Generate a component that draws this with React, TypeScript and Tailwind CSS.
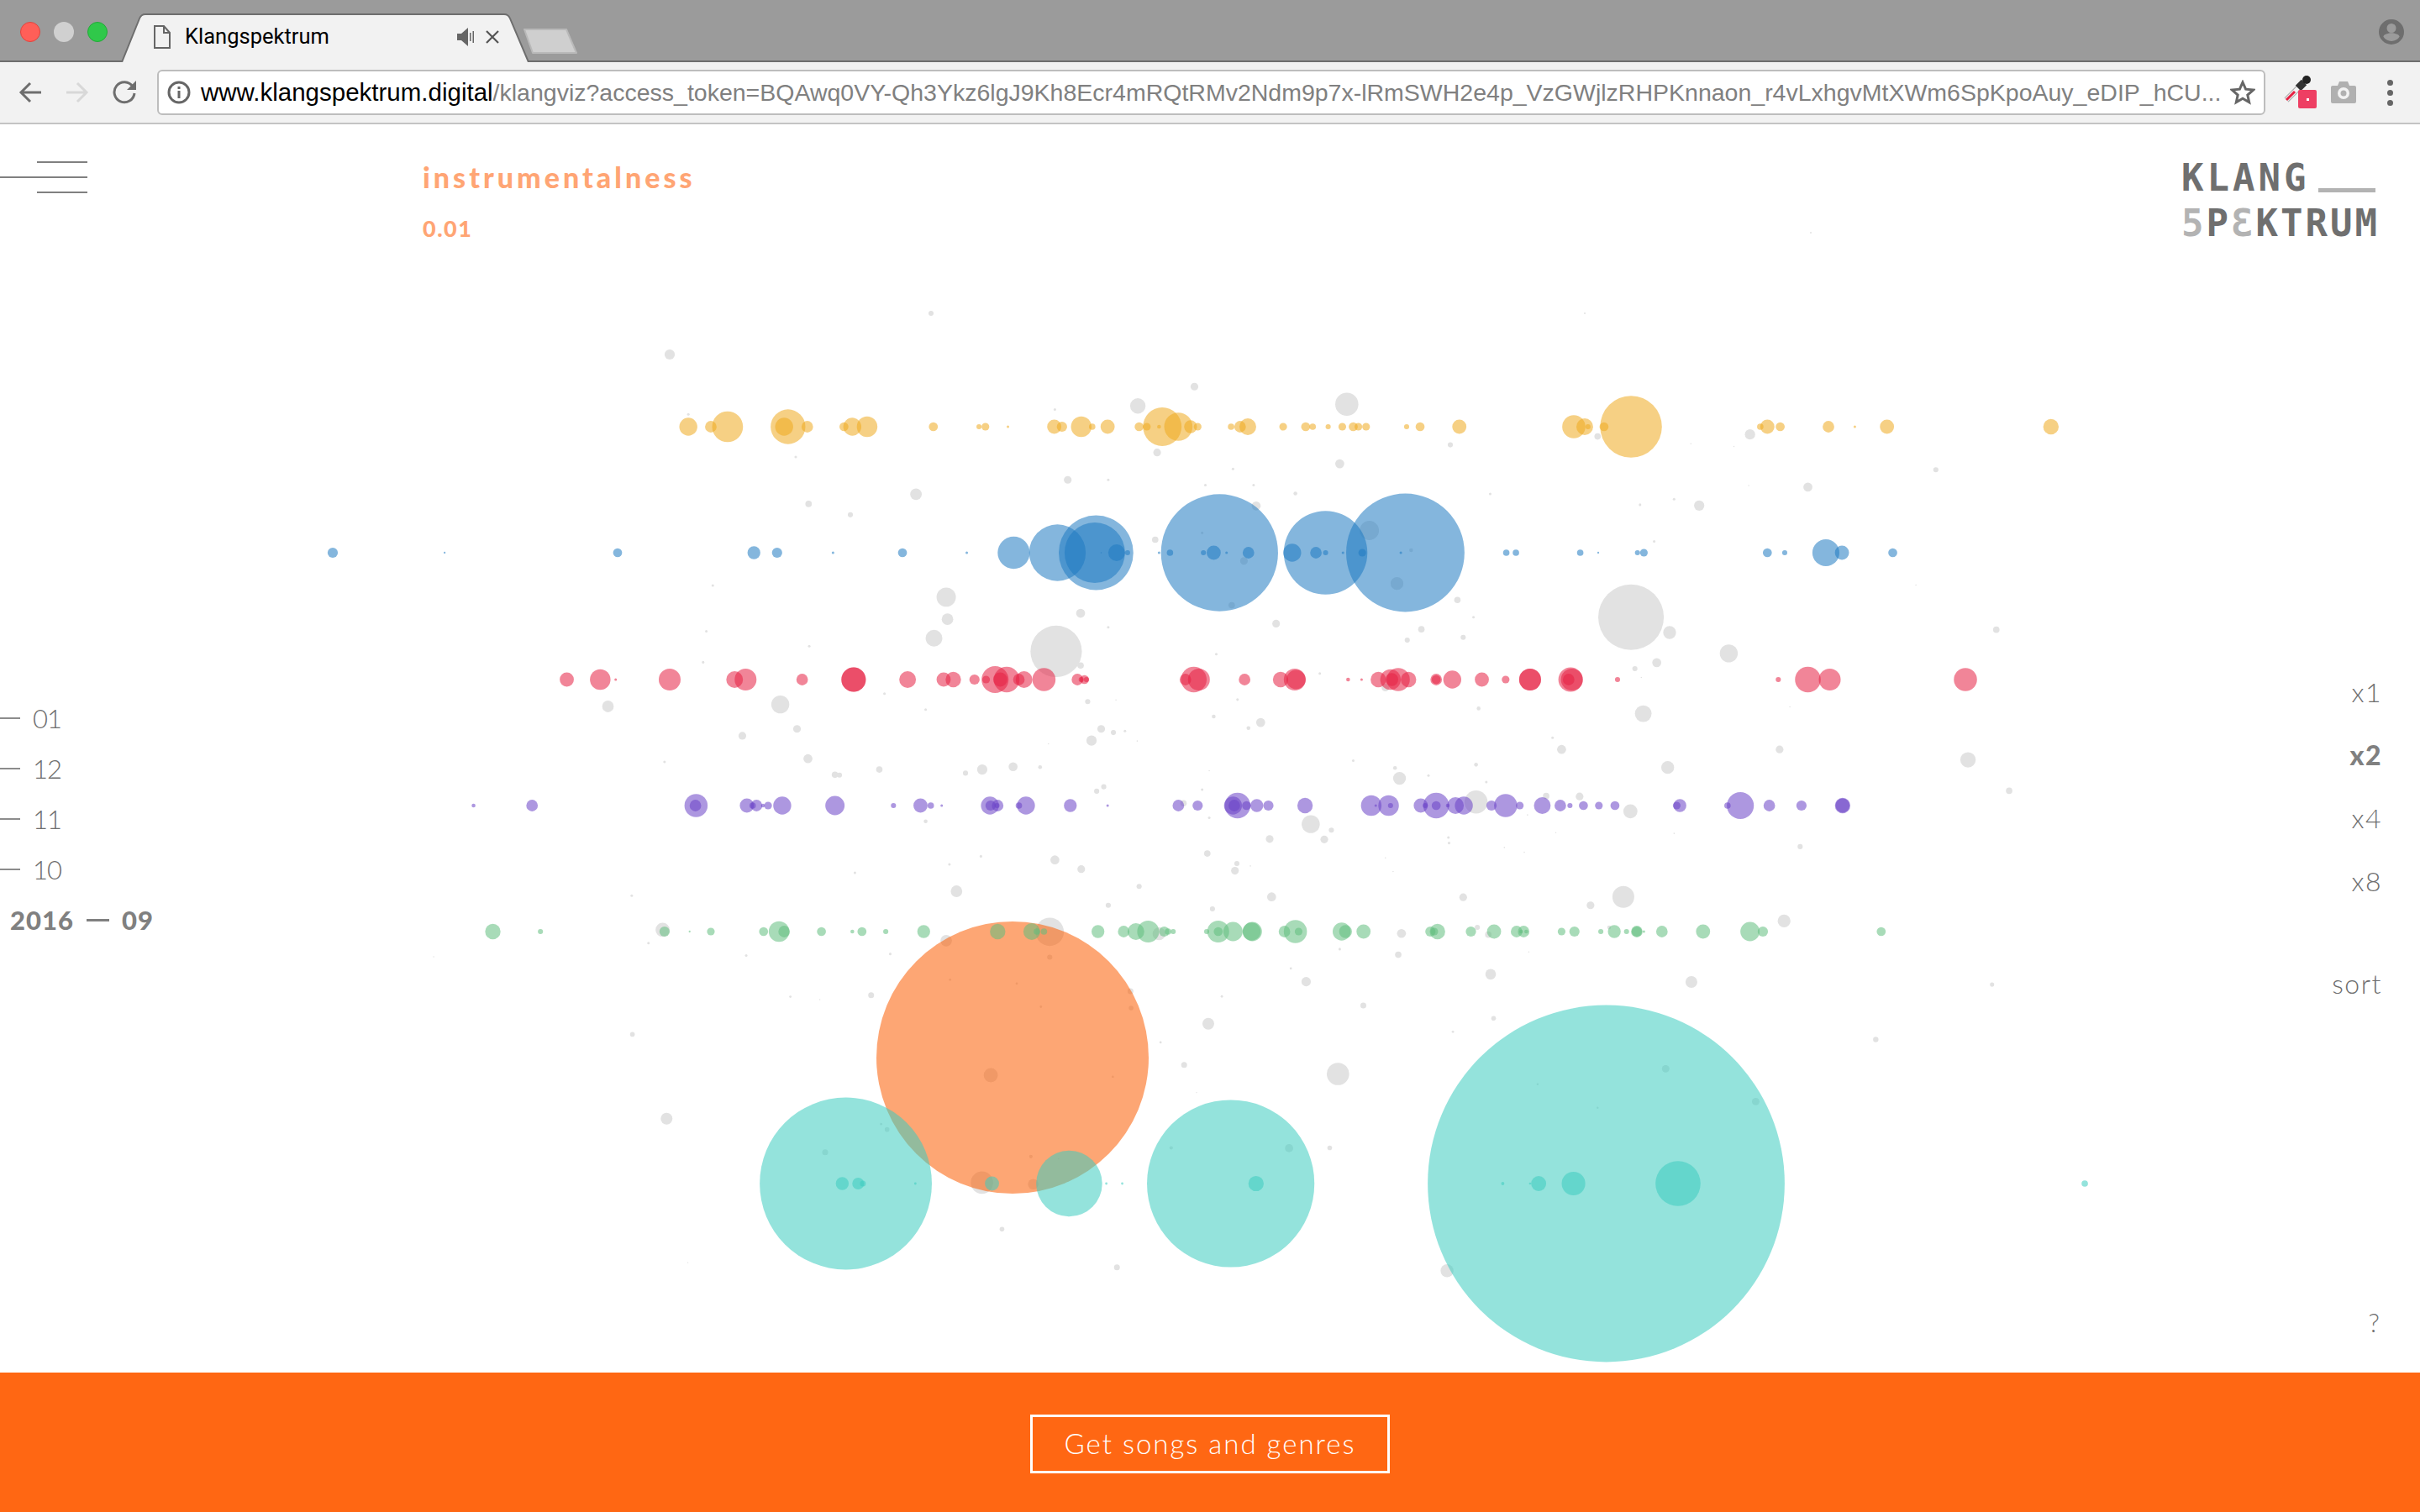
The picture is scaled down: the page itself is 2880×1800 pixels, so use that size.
import React from "react";

type C = [number, number];
type G = [number, number, number];
const K6 = 0.7653;
const K8 = 0.7015;
const K9 = 0.6378;

const rows: { y: number; fill: string; a: C[]; b: C[]; c?: C[]; d?: C[] }[] = [
  {
    y: 508,
    fill: "#EFAA1F",
    a: [[600,14],[635,9],[661,24],[755,27],[749,14],[785,9],[842,7],[855,14],[878,16],[981,7],[1052,4],[1062,6],[1097,2],[1169,11],[1181,8],[1211,16],[1228,5],[1252,11],[1301,7],[1313,6],[1332,3],[1337,30],[1362,22],[1381,10],[1392,6],[1444,5],[1458,9],[1470,13],[1525,6],[1560,7]],
    b: [[212,5],[236,4],[258,6],[275,7],[283,6],[295,6],[358,4],[379,7],[440,11],[618,18],[635,13],[640,4],[665,7],[707,48],[908,5],[919,11],[939,7],[1014,9],[1055,2],[1105,11],[1360,12]],
  },
  {
    y: 658,
    fill: "#1F7AC1",
    a: [[47,8],[221,1.5],[490,7],[702,10],[738,8],[825,2],[933,7],[1033,2],[1106,25],[1174,44],[1234,58],[1232,47],[1266,13],[1242,1],[1283,4],[1332,2],[1349,5],[1401,4],[1417,11],[1426,91],[1437,2],[1471,9],[1539,14]],
    b: [[217,9],[232,4],[232,65],[259,2],[289,6],[356,92],[349,2],[513,5],[528,5],[628,5],[656,1.5],[717,4],[727,6],[919,7],[946,4],[1010,21],[1035,11],[1114,7]],
  },
  {
    y: 809,
    fill: "#E62143",
    a: [[411,11],[463,16],[487,2],[571,17],[672,13],[689,17],[777,9],[857,19],[857,19],[941,13],[997,11],[1012,12],[1045,8],[1063,6],[1077,21],[1085,11],[1095,20],[1114,9],[1122,13],[1153,18],[1205,9],[1211,4],[1216,7],[1219,4],[1373,9],[1386,20],[1394,17],[1465,9],[1521,12],[1543,17],[1545,15]],
    b: [[267,3],[288,2],[314,12],[333,16],[345,18],[335,10],[361,12],[404,9],[404,7],[429,14],[475,11],[512,6],[550,17],[550,17],[613,19],[615,17],[610,9],[686,4],[936,4],[982,20],[1016,17],[1227,18]],
  },
  {
    y: 959,
    fill: "#6A42C6",
    a: [[266,3],[357,9],[612,18],[611,9],[691,11],[700,5],[706,9],[716,3],[724,6],[746,14],[828,15],[919,4],[961,11],[977,5],[994,2],[1069,14],[1070,8],[1081,9],[1080,4],[1114,5],[1125,14],[1194,10],[1252,2],[1362,9],[1392,8],[1447,14],[1454,20],[1449,9],[1468,7],[1484,10],[1502,8],[1559,12]],
    b: [[303,16],[310,2],[330,16],[333,4],[380,11],[387,4],[404,20],[404,7],[422,3],[434,13],[447,14],[490,8],[512,18],[534,6],[569,13],[597,9],[612,4],[633,7],[657,6],[682,7],[778,6],[783,10],[857,5],[877,21],[922,9],[972,8],[1036,12],[1036,11]],
  },
  {
    y: 1109,
    fill: "#61BD7E",
    a: [[296,12],[370,4],[563,8],[602,1.5],[635,6],[717,7],[741,16],[749,9],[807,7],[855,3],[870,7],[907,4],[966,10],[1081,12],[1134,13],[1142,5],[1153,5],[1237,10],[1277,9],[1296,13],[1315,17],[1340,8],[1346,5],[1354,4],[1406,4],[1424,17],[1424,7],[1447,15],[1477,15],[1476,14],[1527,9],[1544,18],[1549,6]],
    b: [[257,14],[263,10],[291,11],[395,8],[406,12],[401,6],[458,8],[494,11],[529,9],[540,9],[536,3],[544,3],[599,6],[619,8],[660,4],[681,10],[700,4],[716,9],[716,8],[727,2],[755,9],[819,11],[892,15],[912,8],[1096,7]],
  },
  {
    y: 1409,
    fill: "#3CCCBF",
    a: [],
    b: [],
    c: [[431,11],[458,10],[466,5],[437,146],[555,2],[685,12],[816,56],[879,2],[906,2],[1090,142],[1133,13]],
    d: [[410,333],[217,3],[284,14],[268,2],[349,22],[544,42],[1303,6]],
  },
];

const grayA: G[] = [[571,46,8],[1387,126,6],[1299,174,12],[600,195,2],[1170,183,2],[767,301,2],[1329,290,6],[1447,331,2],[1190,358,6],[1253,358,2],[1404,371,2],[1479,371,2],[954,394,9],[787,418,5],[852,445,4],[1544,392,3],[1483,423,7],[1326,507,5],[1399,490,2],[1464,560,6],[638,621,2],[1001,650,15],[1003,705,9],[1210,690,7],[1445,670,5],[1514,716,6],[982,752,13],[1172,785,40],[628,735,2],[788,772,2],[1253,725,2],[623,812,2],[1421,792,2],[1210,820,5],[475,922,9],[743,917,14],[905,890,2],[1221,910,4],[969,930,2],[1265,906,1],[1454,905,2],[769,978,6],[684,995,6],[1242,978,6],[1261,987,4],[1279,983,2],[1417,947,3],[1471,976,3],[1490,962,7],[1227,1007,8],[1160,1015,1],[1298,1008,1],[563,1060,2],[786,1052,7],[828,1092,5],[835,1093,4],[897,1079,5],[1031,1088,4],[1057,1079,8],[1105,1072,7],[1147,1073,3],[1410,1082,1],[1235,1133,4],[1246,1122,4],[1399,1129,2],[1370,1163,5],[969,1208,3],[1410,1199,2],[1504,1252,6],[1566,1215,12],[1055,1295,2],[1006,1315,2],[859,1336,2],[1170,1304,7],[1211,1327,6],[1407,1288,5],[1453,1313,4],[1450,1331,6],[1474,1319,1],[512,1393,2],[1017,1382,9],[1301,1370,4],[1507,1396,7],[1253,1417,4],[1415,1426,4],[560,1478,11],[1162,1483,22],[1001,1505,9],[1332,1488,10],[538,1511,2],[204,1545,1],[690,1542,2],[914,1538,2],[1162,1546,4]];
const grayB: G[] = [[265,170,18],[426,271,4],[254,318,7],[655,250,5],[800,268,1],[867,275,1],[892,245,8],[1181,333,4],[982,376,7],[890,372,1],[300,484,15],[343,616,10],[365,533,3],[488,393,2],[437,657,5],[721,420,2],[774,406,2],[813,422,8],[743,511,2],[1150,620,1],[462,700,2],[707,700,51],[767,738,10],[381,730,5],[359,757,4],[446,750,4],[1275,731,5],[859,790,14],[747,813,7],[713,828,4],[723,850,1],[223,840,2],[325,875,6],[470,927,3],[726,940,13],[954,923,1],[585,1000,2],[599,1029,7],[938,1029,6],[1231,1055,12],[275,1057,2],[340,1075,3],[466,1067,3],[392,1094,2],[347,1101,10],[482,1110,2],[764,1074,10],[1295,1132,5],[466,1160,18],[575,1145,5],[627,1146,6],[706,1183,11],[546,1192,1],[209,1215,14],[241,1230,4],[230,1253,6],[423,1248,2],[424,1262,2],[590,1236,1],[774,1238,1],[970,1271,4],[510,1273,1],[541,1285,1],[325,1299,1],[337,1333,1],[446,1397,6],[695,1396,17],[644,1417,6],[945,1456,10],[350,1487,7],[468,1472,4],[485,1490,5],[673,1472,3],[254,1526,2],[548,1533,1],[345,1540,5]];
const grayC: G[] = [[614,304,2],[727,316,2],[920,340,5],[921,392,4],[768,388,2],[343,357,2],[393,366,1],[480,352,5],[1075,356,2],[75,474,4],[1052,441,10],[971,499,2],[1011,569,5],[683,601,12],[890,606,2],[1032,655,1],[1272,597,19],[1218,310,8],[1192,269,2],[1315,384,5],[1536,424,4],[1467,466,2],[1531,287,9],[133,736,10],[497,753,2],[507,770,4],[402,841,5],[989,827,3],[1189,828,7],[1258,827,4],[751,854,3],[798,861,1],[668,935,19],[755,940,9],[702,1080,4],[169,1184,1],[897,1199,5],[1457,1209,11]];
const grayD: G[] = [[1130,319,4],[913,490,5],[569,311,11],[521,581,7],[282,629,2],[394,702,2],[689,683,7]];

function Chart() {
  const gray: [number, number, number][] = [
    ...grayA.map(([x, y, r]) => [360 + x * K6, 400 + y * 0.4783, r * K6] as [number, number, number]),
    ...grayB.map(([x, y, r]) => [1400 + x * K6, 400 + y * 0.4783, r * K6] as [number, number, number]),
    ...grayC.map(([x, y, r]) => [700 + x * K8, 1050 + y * 0.3827, r * K8] as [number, number, number]),
    ...grayD.map(([x, y, r]) => [1650 + x * K9, 1050 + y * 0.3827, r * K9] as [number, number, number]),
    [1108, 373, 3],
    [1886, 373, 1],
    [2155, 277, 1],
  ];
  return (
    <svg className="absolute left-0 top-0" width={2880} height={1486} viewBox="0 148 2880 1486">
      {gray.map(([x, y, r], i) => (
        <circle key={i} cx={x} cy={y} r={r} fill="#E2E2E2" />
      ))}
      <circle cx={1205} cy={1259} r={162} fill="#FB5D02" fillOpacity={0.55} />
      {rows.map((row) => (
        <g key={row.y} fill={row.fill} fillOpacity={0.55}>
          {row.a.map(([x, r], i) => (
            <circle key={"a" + i} cx={360 + x * K6} cy={row.y} r={r * K6} />
          ))}
          {row.b.map(([x, r], i) => (
            <circle key={"b" + i} cx={1400 + x * K6} cy={row.y} r={r * K6} />
          ))}
          {(row.c || []).map(([x, r], i) => (
            <circle key={"c" + i} cx={700 + x * K8} cy={row.y} r={r * K8} />
          ))}
          {(row.d || []).map(([x, r], i) => (
            <circle key={"d" + i} cx={1650 + x * K9} cy={row.y} r={r * K9} />
          ))}
        </g>
      ))}
    </svg>
  );
}

function TitleBar() {
  return (
    <div className="relative flex h-[74px] items-center bg-[#9B9B9B] border-b-2 border-[#6e6e6e]">
      <div className="ml-6 flex gap-4 self-start mt-[26px]">
        <div className="h-6 w-6 rounded-full bg-[#FF5F58] border border-[#e0443e]" />
        <div className="h-6 w-6 rounded-full bg-[#D0D0D0]" />
        <div className="h-6 w-6 rounded-full bg-[#30C84A] border border-[#22ab38]" />
      </div>
      <div className="relative ml-[16px] h-[58px] w-[486px] self-start mt-[16px]">
        <svg className="absolute left-0 top-0" width={486} height={58} viewBox="0 0 486 58">
          <path d="M1 58 L22 6 Q24 1 29 1 L456 1 Q461 1 463 6 L485 58" fill="#F2F2F2" stroke="#6e6e6e" strokeWidth="2" />
        </svg>
        <div className="relative flex h-full items-center pl-[38px] pb-[2px] font-['Roboto',sans-serif]">
          <svg width={22} height={30} viewBox="0 0 22 30" fill="none" stroke="#666" strokeWidth="2">
            <path d="M2 2 H13 L20 10 V28 H2 Z M13 2 V10 H20" />
          </svg>
          <span className="ml-[16px] text-[25.500px] leading-none text-black">Klangspektrum</span>
          <svg className="ml-[152px]" width={20} height={26} viewBox="0 0 20 26" fill="#666">
            <path d="M0 9 H5 L13 2 V24 L5 17 H0 Z" />
            <rect x="15" y="8" width="1.5" height="10" />
            <rect x="18.5" y="6" width="1.5" height="14" />
          </svg>
          <svg className="ml-[14px]" width={16} height={16} viewBox="0 0 16 16" stroke="#555" strokeWidth="2.2">
            <path d="M1 1 L15 15 M15 1 L1 15" />
          </svg>
        </div>
      </div>
      <svg className="ml-[-8px] self-start mt-[33px]" width={66} height={32} viewBox="0 0 66 32">
        <path d="M2 2 H52 L64 30 H12 Z" fill="#CFCFCF" stroke="#b9b9b9" strokeWidth="2" strokeLinejoin="round" />
      </svg>
      <svg className="absolute right-[19px] top-[23px]" width={30} height={30} viewBox="0 0 30 30" fill="#6e6e6e">
        <path fillRule="evenodd" d="M15 0a15 15 0 1 0 0 30a15 15 0 0 0 0-30z M15 5a5.5 5.5 0 1 1 0 11a5.5 5.5 0 0 1 0-11z M15 26c-4 0-7.6-2-9.6-5.2c0-3 6.4-4.6 9.6-4.6s9.600 1.600 9.600 4.600C22.600 24 19 26 15 26z" />
      </svg>
    </div>
  );
}

function Toolbar() {
  return (
    <div className="flex h-[74px] items-center border-b-2 border-[#c4c4c4] bg-[#F2F2F2]">
      <svg className="ml-[22px]" width={28} height={26} viewBox="0 0 28 26" fill="none" stroke="#6e6e6e" strokeWidth="3">
        <path d="M14 2 L3 13 L14 24 M3 13 H27" />
      </svg>
      <svg className="ml-[28px]" width={28} height={26} viewBox="0 0 28 26" fill="none" stroke="#d8d8d8" strokeWidth="3">
        <path d="M14 2 L25 13 L14 24 M25 13 H1" />
      </svg>
      <svg className="ml-[28px]" width={30} height={28} viewBox="0 0 30 28" fill="none">
        <path d="M24 7 A12 12 0 1 0 26 15" stroke="#6e6e6e" strokeWidth="3" />
        <path d="M28 0 V11 H17 Z" fill="#6e6e6e" />
      </svg>
      <div className="ml-[23px] flex h-[54px] w-[2509px] items-center rounded-[6px] border-2 border-[#bdbdbd] bg-white pl-[10px] pr-[10px]">
        <svg className="shrink-0" width={28} height={28} viewBox="0 0 28 28" fill="none" stroke="#666" strokeWidth="3">
          <circle cx="14" cy="14" r="12" />
          <path d="M14 12 V21 M14 7 V10" />
        </svg>
        <div className="ml-[12px] min-w-0 flex-1 whitespace-nowrap font-['Liberation_Sans',sans-serif] text-[28.500px] leading-none text-[#808080]">
          <span className="text-[29.500px] text-black">www.klangspektrum.digital</span>/klangviz?access_token=BQAwq0VY-Qh3Ykz6lgJ9Kh8Ecr4mRQtRMv2Ndm9p7x-lRmSWH2e4p_VzGWjlzRHPKnnaon_r4vLxhgvMtXWm6SpKpoAuy_eDIP_hCU...
        </div>
        <svg className="ml-[14px] shrink-0" width={30} height={30} viewBox="0 0 30 30" fill="none" stroke="#666" strokeWidth="3" strokeLinejoin="miter">
          <path d="M15 3 L18.6 11.2 L27.5 12.1 L20.8 18 L22.7 26.8 L15 22.3 L7.3 26.8 L9.2 18 L2.5 12.1 L11.4 11.2 Z" />
        </svg>
      </div>
      <div className="relative ml-[22px] h-[42px] w-[40px]">
        <svg className="absolute left-0 top-0" width={34} height={34} viewBox="0 0 34 34" fill="none">
          <path d="M3 30 L19 14" stroke="#a8a8a8" strokeWidth="7" />
          <path d="M3 30 L19 14" stroke="#f4f4f4" strokeWidth="5" />
          <path d="M3 30 L13 20" stroke="#E62143" strokeWidth="3" />
          <path d="M17 16 L24 9" stroke="#333" strokeWidth="9" />
          <circle cx="27" cy="6" r="5" fill="#222" />
        </svg>
        <div className="absolute left-[17px] top-[18px] flex h-[22px] w-[22px] items-center justify-center rounded-[2px] bg-[#EE3F63]">
          <div className="h-[3px] w-[3px] bg-white" />
        </div>
      </div>
      <svg className="ml-[16px]" width={30} height={26} viewBox="0 0 30 26" fill="#b0b0b0">
        <path fillRule="evenodd" d="M2 5 H8 L10 0 H20 L22 5 H28 Q30 5 30 7 V24 Q30 26 28 26 H2 Q0 26 0 24 V7 Q0 5 2 5 Z M15 7 a7 7 0 1 0 0 14 a7 7 0 0 0 0-14 Z M15 10.500 a3.500 3.500 0 1 1 0 7 a3.500 3.500 0 0 1 0-7 Z" />
      </svg>
      <div className="ml-[37px] flex flex-col gap-[5px]">
        <div className="h-[7px] w-[7px] rounded-full bg-[#666]" />
        <div className="h-[7px] w-[7px] rounded-full bg-[#666]" />
        <div className="h-[7px] w-[7px] rounded-full bg-[#666]" />
      </div>
    </div>
  );
}

function Month({ label }: { label: string }) {
  return (
    <div className="flex h-[60px] items-center">
      <div className="h-[2px] w-[24px] bg-[#8c8c8c]" />
      <span className="ml-[15px] text-[31px] font-light leading-none tracking-[-1px] text-[#6e6e6e]">{label}</span>
    </div>
  );
}

function Overlay() {
  return (
    <div className="relative flex h-full justify-between font-['Lato',sans-serif]">
      <div className="flex w-[503px] shrink-0 flex-col justify-between">
        <div className="flex flex-col items-end w-[104px] gap-4 mt-[44px]">
          <div className="h-[2px] w-[60px] bg-[#808080]" />
          <div className="h-[2px] w-[104px] bg-[#808080]" />
          <div className="h-[2px] w-[60px] bg-[#808080]" />
        </div>
        <div className="mb-[509px] flex flex-col">
          <Month label="01" />
          <Month label="12" />
          <Month label="11" />
          <Month label="10" />
          <div className="flex h-[60px] items-center pl-[12px] text-[31px] font-black leading-none tracking-[1px] text-[#808080]">
            2016<span className="mx-[15px] h-[3px] w-[27px] bg-[#808080]" />09
          </div>
        </div>
      </div>
      <div className="flex-1 pt-[44px]">
        <div className="text-[34px] font-black leading-[38px] tracking-[4px] text-[#FFA574]">instrumentalness</div>
        <div className="mt-[27px] text-[27px] font-black leading-[30px] tracking-[1.500px] text-[#FFA574]">0.01</div>
      </div>
      <div className="flex w-[300px] shrink-0 flex-col items-end pr-[47px] text-[#6e6e6e]">
        <div className="mr-[1px] mt-[37px] font-['DejaVu_Sans_Mono',monospace] text-[44px] font-bold leading-[54px] tracking-[3px] text-[#6f6f6f]">
          <div className="flex items-end">
            <span className="tracking-[4px]">KLANG</span>
            <span className="mb-[10px] ml-[10px] h-[5px] w-[68px] bg-[#b3b3b3]" />
          </div>
          <div>
            <span className="text-[#b3b3b3]">5</span>P<span className="text-[#b3b3b3]">Ɛ</span>KTRUM
          </div>
        </div>
        <div className="mr-[-2px] mt-[493px] flex flex-col items-end text-[32px] font-light leading-[75px] tracking-[1.500px]">
          <span>x1</span>
          <span className="font-black text-[#808080]">x2</span>
          <span>x4</span>
          <span>x8</span>
          <span className="mt-[47px] leading-[75px]">sort</span>
        </div>
        <span className="mr-[1px] mt-[351px] text-[31px] font-light leading-none">?</span>
      </div>
    </div>
  );
}

export default function App() {
  return (
    <div className="flex h-[1800px] w-[2880px] flex-col overflow-hidden bg-white">
      <TitleBar />
      <Toolbar />
      <div className="relative flex-1">
        <Chart />
        <Overlay />
      </div>
      <div className="flex h-[166px] items-center justify-center bg-[#FF6713] pt-[3px]">
        <button className="flex h-[70px] w-[428px] items-center justify-center border-[3px] border-white font-['Lato',sans-serif] text-[33px] font-light tracking-[2px] text-white">
          Get songs and genres
        </button>
      </div>
    </div>
  );
}
